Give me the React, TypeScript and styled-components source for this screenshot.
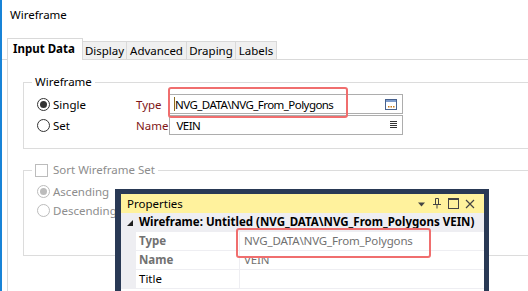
import React from 'react';
import styled, {createGlobalStyle} from 'styled-components';

const GlobalStyle = createGlobalStyle`
  html, body {
    margin: 0;
    padding: 0;
    background: #fff;
    overflow: hidden;
  }
  body {
    font-family: "Noto Sans", "Liberation Sans", sans-serif;
    font-size: 11.5px;
    color: #000;
  }
`;

const Window = styled.div`
  position: relative;
  width: 560px;
  height: 291px;
  overflow: hidden;
  border-left: 2px solid #1883d7;
  background: #fff;
`;

const Title = styled.div`
  height: 30px;
  line-height: 30px;
  padding-left: 8px;
`;

const TabStrip = styled.div`
  display: flex;
  align-items: flex-end;
  height: 21px;
  margin-top: 8px;
  padding-left: 5px;
  border-bottom: 1px solid #d9d9d9;
`;

const Tab = styled.div<{$active?: boolean; $width: number}>`
  box-sizing: border-box;
  width: ${p => p.$width}px;
  height: ${p => (p.$active ? 22 : 19)}px;
  margin-bottom: -1px;
  border: 1px solid #d9d9d9;
  border-left-width: ${p => (p.$active ? 1 : 0)}px;
  border-bottom-width: ${p => (p.$active ? 0 : 1)}px;
  background: ${p => (p.$active ? '#fff' : '#f0f0f0')};
  font-weight: ${p => (p.$active ? 700 : 400)};
  padding-left: ${p => (p.$active ? 5 : 0)}px;
  text-align: ${p => (p.$active ? 'left' : 'center')};
  line-height: ${p => (p.$active ? 20 : 17)}px;
  white-space: nowrap;
`;

const Panel = styled.div`
  margin-left: 5px;
  border-left: 1px solid #d9d9d9;
  padding: 14px 0 0 15px;
  height: 300px;
`;

const GroupBox = styled.fieldset<{$height: number}>`
  box-sizing: border-box;
  width: 540px;
  height: ${p => p.$height}px;
  margin: 0;
  padding: 4px 0 0 13px;
  border: 1px solid #dcdcdc;
  min-width: 0;

  & + & {
    margin-top: 13px;
  }
`;

const Legend = styled.legend<{$disabled?: boolean}>`
  display: flex;
  align-items: center;
  gap: 5px;
  height: 16px;
  margin-left: -5px;
  padding: 0 3px;
  line-height: 16px;
  color: ${p => (p.$disabled ? '#8d8d8d' : '#000')};
`;

const Row = styled.div<{$height: number}>`
  display: flex;
  align-items: center;
  height: ${p => p.$height}px;

  & + & {
    margin-top: ${p => (p.$height > 19 ? 7 : 1)}px;
  }
`;

const Option = styled.label<{$disabled?: boolean}>`
  display: flex;
  align-items: center;
  gap: 3px;
  width: 99px;
  color: ${p => (p.$disabled ? '#8d8d8d' : '#000')};
`;

const RadioCircle = styled.span<{$checked?: boolean; $disabled?: boolean}>`
  box-sizing: border-box;
  width: 13px;
  height: 13px;
  border-radius: 50%;
  border: 1px solid ${p => (p.$disabled ? '#bcbcbc' : '#333')};
  display: flex;
  align-items: center;
  justify-content: center;

  &::after {
    content: '';
    display: ${p => (p.$checked ? 'block' : 'none')};
    width: 7px;
    height: 7px;
    border-radius: 50%;
    background: ${p => (p.$disabled ? '#bcbcbc' : '#333')};
  }
`;

const CheckBox = styled.span`
  box-sizing: border-box;
  width: 13px;
  height: 13px;
  border: 1px solid #bcbcbc;
  background: #fff;
`;

const FieldLabel = styled.span`
  width: 33px;
  color: #7f1616;
`;

const Field = styled.div`
  box-sizing: border-box;
  width: 234px;
  height: 20px;
  border: 1px solid #adadad;
  display: flex;
  align-items: center;
  padding: 0 5px 0 4px;
`;

const Caret = styled.span`
  width: 1px;
  height: 14px;
  background: #8a6a1e;
`;

const FieldText = styled.span`
  flex: 1;
  white-space: nowrap;
  letter-spacing: -0.55px;
`;

const Highlight = styled.div<{$x: number; $y: number; $w: number; $h: number}>`
  position: absolute;
  left: ${p => p.$x}px;
  top: ${p => p.$y}px;
  width: ${p => p.$w}px;
  height: ${p => p.$h}px;
  box-sizing: border-box;
  border: 2px solid #f06e6e;
  border-radius: 3px;
  pointer-events: none;
`;

const PropsWindow = styled.div`
  position: absolute;
  left: 113px;
  top: 189px;
  width: 374px;
  height: 110px;
  box-sizing: border-box;
  border: solid #293955;
  border-width: 5px 5px 0 6px;
  background: #fff;
`;

const PropsTitle = styled.div`
  display: flex;
  align-items: center;
  height: 19px;
  padding: 0 9px 0 6px;
  background: #fff29d;
`;

const PropsTitleText = styled.span`
  flex: 1;
`;

const TitleButtons = styled.div`
  display: flex;
  align-items: center;
  gap: 6px;
`;

const Category = styled.div`
  display: flex;
  align-items: center;
  height: 19px;
  padding-left: 6px;
  gap: 6px;
  background: #eeeef2;
  white-space: nowrap;
`;

const CategoryText = styled.span`
  font-weight: 700;
  line-height: 19px;
  position: relative;
  top: -1px;
`;

const PropRow = styled.div`
  display: grid;
  grid-template-columns: 15px 104px 1fr;
  height: 19px;
  line-height: 18px;
  white-space: nowrap;
`;

const Gutter = styled.div`
  background: #eeeef2;
`;

const PropName = styled.div<{$readonly?: boolean}>`
  padding-left: 3px;
  border-bottom: 1px solid #eeeef2;
  border-right: 1px solid #eeeef2;
  color: ${p => (p.$readonly ? '#717171' : '#000')};
  font-weight: ${p => (p.$readonly ? 700 : 400)};
`;

const PropValue = styled.div`
  padding-left: 4px;
  border-bottom: 1px solid #eeeef2;
  color: #717171;
  letter-spacing: -0.15px;
`;

const Radio = ({label, checked, disabled}: {label: string; checked?: boolean; disabled?: boolean}) => (
  <Option $disabled={disabled}>
    <RadioCircle $checked={checked} $disabled={disabled} />
    {label}
  </Option>
);

const BrowseIcon = () => (
  <svg width="12" height="11" viewBox="0 0 12 11">
    <rect x="0.5" y="0.5" width="11" height="10" fill="#fff" stroke="#47618d" />
    <rect x="1" y="1" width="10" height="2" fill="#7e9ccc" />
    <rect x="3" y="7" width="1.5" height="1.5" fill="#c77a1a" />
    <rect x="5.5" y="7" width="1.5" height="1.5" fill="#c77a1a" />
    <rect x="8" y="7" width="1.5" height="1.5" fill="#c77a1a" />
  </svg>
);

const ListIcon = () => (
  <svg width="7" height="8" viewBox="0 0 7 8">
    {[0.5, 2.5, 4.5, 6.5].map(y => (
      <line key={y} x1="0" x2="7" y1={y} y2={y} stroke="#333" />
    ))}
  </svg>
);

const DropIcon = () => (
  <svg width="9" height="10" viewBox="0 0 9 10">
    <path d="M1 3.5h7L4.5 7.5z" fill="#444" />
  </svg>
);

const PinIcon = () => (
  <svg width="10" height="11" viewBox="0 0 10 11">
    <path d="M3.5 0.5h3v6h-3z M1 6.5h8 M5 6.5v4" fill="none" stroke="#444" />
  </svg>
);

const MaxIcon = () => (
  <svg width="11" height="11" viewBox="0 0 11 11">
    <rect x="0.5" y="0.5" width="10" height="10" fill="none" stroke="#444" />
    <line x1="0.5" x2="10.5" y1="1.5" y2="1.5" stroke="#444" />
  </svg>
);

const CloseIcon = () => (
  <svg width="10" height="10" viewBox="0 0 10 10">
    <path d="M1 1l8 8M9 1l-8 8" stroke="#444" strokeWidth="1.2" />
  </svg>
);

const CollapseIcon = () => (
  <svg width="6" height="6" viewBox="0 0 6 6">
    <path d="M6 0v6H0z" fill="#1e1e1e" />
  </svg>
);

const tabs = [
  {key: 'input', name: 'Input Data', width: 76},
  {key: 'display', name: 'Display', width: 44},
  {key: 'advanced', name: 'Advanced', width: 60},
  {key: 'draping', name: 'Draping', width: 49},
  {key: 'labels', name: 'Labels', width: 41},
];

const properties = [
  {name: 'Type', value: 'NVG_DATA\\NVG_From_Polygons', readonly: true},
  {name: 'Name', value: 'VEIN', readonly: true},
  {name: 'Title', value: '', readonly: false},
];

const App = () => (
  <>
    <GlobalStyle />
    <Window>
      <Title>Wireframe</Title>
      <TabStrip>
        {tabs.map((tab, i) => (
          <Tab key={tab.key} $active={i === 0} $width={tab.width}>
            {tab.name}
          </Tab>
        ))}
      </TabStrip>
      <Panel>
        <GroupBox $height={75}>
          <Legend>Wireframe</Legend>
          <Row $height={20}>
            <Radio label="Single" checked />
            <FieldLabel>Type</FieldLabel>
            <Field>
              <Caret />
              <FieldText>NVG_DATA\NVG_From_Polygons</FieldText>
              <BrowseIcon />
            </Field>
          </Row>
          <Row $height={20}>
            <Radio label="Set" />
            <FieldLabel>Name</FieldLabel>
            <Field>
              <FieldText>&nbsp;VEIN</FieldText>
              <ListIcon />
            </Field>
          </Row>
        </GroupBox>
        <GroupBox $height={94}>
          <Legend $disabled>
            <CheckBox />
            Sort Wireframe Set
          </Legend>
          <Row $height={18}>
            <Radio label="Ascending" checked disabled />
          </Row>
          <Row $height={18}>
            <Radio label="Descending" disabled />
          </Row>
        </GroupBox>
      </Panel>

      <Highlight $x={166} $y={87} $w={180} $h={31} />

      <PropsWindow>
        <PropsTitle>
          <PropsTitleText>Properties</PropsTitleText>
          <TitleButtons>
            <DropIcon />
            <PinIcon />
            <MaxIcon />
            <CloseIcon />
          </TitleButtons>
        </PropsTitle>
        <Category>
          <CollapseIcon />
          <CategoryText>Wireframe: Untitled (NVG_DATA\NVG_From_Polygons VEIN)</CategoryText>
        </Category>
        {properties.map(prop => (
          <PropRow key={prop.name}>
            <Gutter />
            <PropName $readonly={prop.readonly}>{prop.name}</PropName>
            <PropValue>{prop.value}</PropValue>
          </PropRow>
        ))}
      </PropsWindow>

      <Highlight $x={234} $y={228} $w={195} $h={30} />
    </Window>
  </>
);

export default App;
